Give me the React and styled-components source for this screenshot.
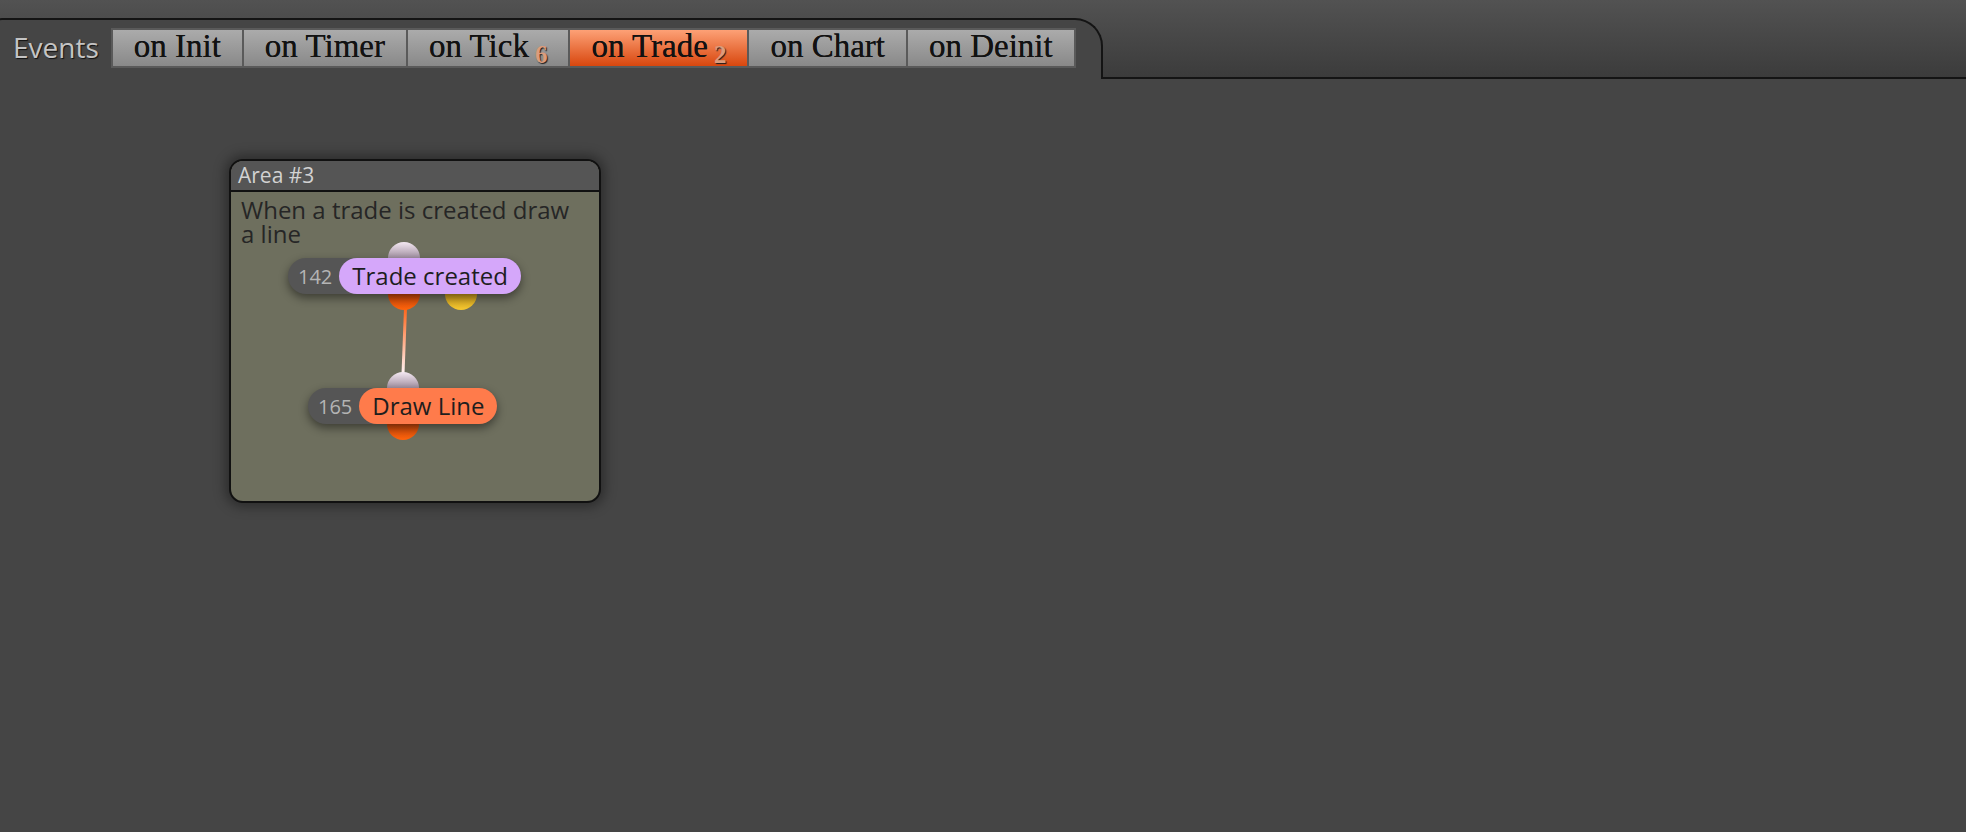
import React from "react";
import styled, { createGlobalStyle } from "styled-components";

const GlobalStyle = createGlobalStyle`
  html, body {
    margin: 0;
    padding: 0;
    background: #454545;
    font-family: "Open Sans", "Noto Sans", sans-serif;
  }
  body {
    min-height: 100vh;
    overflow: hidden;
  }
`;

const Header = styled.div`
  display: flex;
  height: 79px;
  background: linear-gradient(#525252, #3b3b3b);
`;

const EventsTab = styled.div`
  display: flex;
  align-items: flex-start;
  gap: 12px;
  box-sizing: border-box;
  width: 1115px;
  margin: 18px 0 0 -12px;
  padding: 8px 0 0 23px;
  background: #454545;
  border: 2px solid #141414;
  border-bottom: none;
  border-radius: 14px 28px 0 0;
`;

const TabFiller = styled.div`
  flex: 1;
  border-bottom: 2px solid #141414;
`;

const EventsLabel = styled.span`
  font-family: "Open Sans", sans-serif;
  font-size: 28px;
  line-height: 38px;
  color: #c4c4c4;
  text-shadow: 1px 1px 1px #111;
`;

const ButtonStrip = styled.div`
  display: flex;
  gap: 2px;
  padding: 2px;
  background: #5a5a5a;
`;

const EventButton = styled.button`
  height: 36px;
  padding: 0 21px 4px;
  border: none;
  border-radius: 0;
  font-family: "Liberation Serif", "Times New Roman", serif;
  font-size: 33px;
  line-height: 32px;
  color: #121212;
  text-shadow: 0 0 0.4px #121212;
  cursor: pointer;
  white-space: nowrap;
  background: ${(p) =>
    p.$active
      ? "linear-gradient(#fda176, #d8470e)"
      : "linear-gradient(#ababab, #898989)"};
`;

const Count = styled.span`
  display: inline-block;
  margin-left: 6px;
  font-size: 25px;
  font-weight: bold;
  color: #dc9c7c;
  text-shadow: 1px 1px 1px #1c1c1c;
  vertical-align: -6px;
`;

const Workspace = styled.div`
  padding: 80px 0 0 229px;
`;

const Area = styled.div`
  box-sizing: border-box;
  width: 372px;
  height: 344px;
  display: flex;
  flex-direction: column;
  border: 2px solid #111;
  border-radius: 14px;
  overflow: hidden;
  background: #6e6f5e;
  box-shadow: 0 0 12px 4px rgba(0, 0, 0, 0.35);
`;

const AreaTitle = styled.div`
  height: 29px;
  padding-left: 7px;
  background: #555555;
  border-bottom: 2px solid #111;
  font-size: 21px;
  line-height: 28px;
  color: #d2d2d2;
`;

const AreaBody = styled.div`
  position: relative;
  flex: 1;
  padding: 6px 18px 0 10px;
`;

const Description = styled.div`
  font-size: 24px;
  line-height: 24px;
  color: #262626;
`;

const Wire = styled.svg`
  position: absolute;
  left: 0;
  top: 0;
  overflow: visible;
`;

const Node = styled.div`
  position: absolute;
  left: ${(p) => p.$x}px;
  top: ${(p) => p.$y}px;
`;

const NodeBody = styled.div`
  position: relative;
  z-index: 1;
  display: flex;
  align-items: center;
  height: 36px;
  border-radius: 18px;
  background: #555555;
  box-shadow: 0 4px 10px rgba(0, 0, 0, 0.45);
`;

const NodeId = styled.span`
  padding: 0 7px 0 10px;
  font-size: 20px;
  color: #b4b4b4;
`;

const NodeLabel = styled.span`
  height: 36px;
  padding: 0 13px;
  border-radius: 18px;
  background: ${(p) => p.$color};
  font-size: 24px;
  line-height: 35px;
  color: #1e1e1e;
  white-space: nowrap;
`;

const Knob = styled.span`
  position: absolute;
  z-index: 0;
  left: calc(50% + ${(p) => p.$dx || 0}px);
  width: 32px;
  height: 32px;
  margin-left: -16px;
  border-radius: 50%;
  ${(p) => (p.$top ? "top: -16px;" : "bottom: -16px;")}
  background: ${(p) => p.$fill};
`;

const inputFill = "linear-gradient(#f4e8f2, #a08fa0 50%)";
const outputFill = "linear-gradient(#c8460a 50%, #ff640c)";
const altFill = "linear-gradient(#c99a1c 50%, #f6c830)";

const events = [
  { name: "on Init" },
  { name: "on Timer" },
  { name: "on Tick", count: 6 },
  { name: "on Trade", count: 2, active: true },
  { name: "on Chart" },
  { name: "on Deinit" },
];

export default function App() {
  return (
    <>
      <GlobalStyle />
      <Header>
        <EventsTab>
          <EventsLabel>Events</EventsLabel>
          <ButtonStrip>
            {events.map((e) => (
              <EventButton key={e.name} $active={e.active}>
                {e.name}
                {e.count && <Count>{e.count}</Count>}
              </EventButton>
            ))}
          </ButtonStrip>
        </EventsTab>
        <TabFiller />
      </Header>

      <Workspace>
        <Area>
          <AreaTitle>Area #3</AreaTitle>
          <AreaBody>
            <Description>When a trade is created draw a line</Description>

            {/* link from the trade output to the draw input */}
            <Wire width="1" height="1">
              <defs>
                <linearGradient id="wire" x1="0" y1="0" x2="0" y2="1">
                  <stop offset="0" stopColor="#ff6418" />
                  <stop offset="1" stopColor="#fff4f6" />
                </linearGradient>
              </defs>
              <polygon points="173,116 176,116 173.5,182 170.5,182" fill="url(#wire)" />
            </Wire>

            <Node $x={57} $y={66}>
              <Knob $top $fill={inputFill} />
              <Knob $fill={outputFill} />
              <Knob $dx={57} $fill={altFill} />
              <NodeBody>
                <NodeId>142</NodeId>
                <NodeLabel $color="#d5a7fa">Trade created</NodeLabel>
              </NodeBody>
            </Node>

            <Node $x={77} $y={196}>
              <Knob $top $fill={inputFill} />
              <Knob $fill={outputFill} />
              <NodeBody>
                <NodeId>165</NodeId>
                <NodeLabel $color="#ff7b4b">Draw Line</NodeLabel>
              </NodeBody>
            </Node>
          </AreaBody>
        </Area>
      </Workspace>
    </>
  );
}
